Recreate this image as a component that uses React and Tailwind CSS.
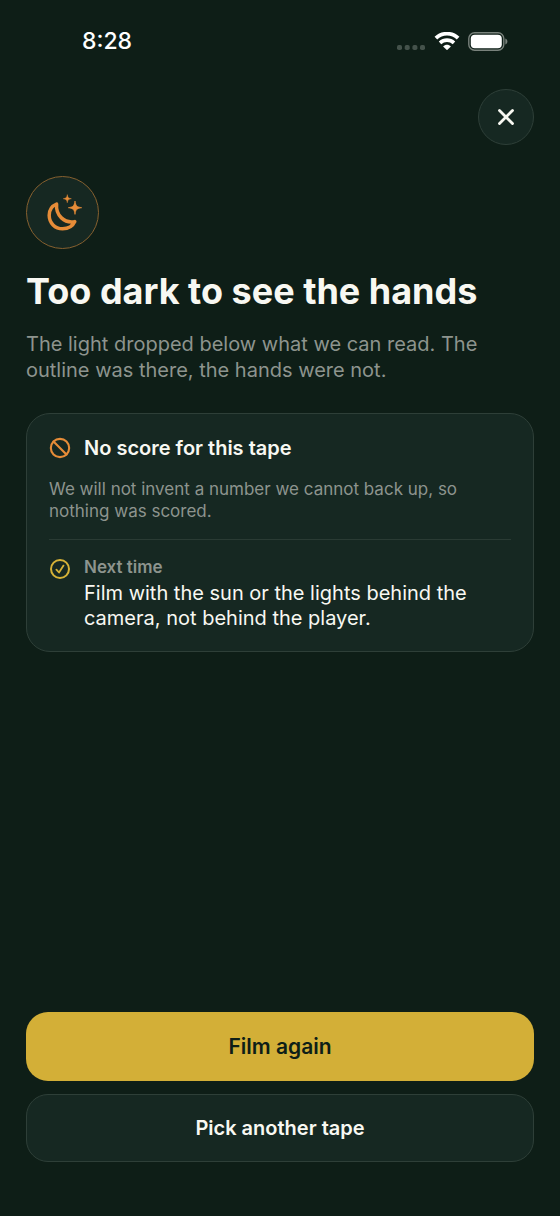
import { Ban, X } from 'lucide-react';

function StatusBar() {
  return (
    <div className="h-[82px] pl-14 pr-[26px] flex items-center justify-between text-white">
      <span className="text-[23px] font-medium">8:28</span>
      <div className="flex items-center gap-2">
        <svg width="29" height="20" viewBox="0 0 29 20" fill="#44524b">
          <rect x="0" y="14" width="5" height="5" rx="1.8" />
          <rect x="7.7" y="14" width="5" height="5" rx="1.8" />
          <rect x="15.4" y="14" width="5" height="5" rx="1.8" />
          <rect x="23" y="14" width="5" height="5" rx="1.8" />
        </svg>
        <svg width="26" height="18" viewBox="0 0 25 18" fill="none" stroke="currentColor">
          <path d="M1.4 6.2C7.5 .2 17.5 .2 23.6 6.2" strokeWidth="3.8" />
          <path d="M5.5 10.9C9.5 7.2 15.5 7.2 19.5 10.9" strokeWidth="3.6" />
          <path d="M8.6 14.4C10.8 12.2 14.2 12.2 16.4 14.4L12.5 18.2Z" fill="currentColor" stroke="none" />
        </svg>
        <svg width="40" height="19" viewBox="0 0 40 19" fill="none">
          <rect x=".8" y=".8" width="35" height="17.4" rx="5.8" stroke="#79827c" strokeWidth="1.4" />
          <rect x="2.8" y="2.8" width="31" height="13.4" rx="4" fill="#fff" />
          <path d="M37.3 6.5C40.1 7.4 40.1 11.6 37.3 12.5Z" fill="#79827c" />
        </svg>
      </div>
    </div>
  );
}

function MoonStars() {
  return (
    <svg width="40" height="40" viewBox="1 0 40 40" fill="none" aria-hidden="true">
      <path
        d="M14.6 11C9.8 13 7.2 17.4 7.2 22.3C7.2 30 13 35.8 20.6 35.8C26.2 35.8 30.6 33.4 32.8 28.6C22.5 30.6 13.5 22.5 14.6 11Z"
        stroke="currentColor"
        strokeWidth="3.5"
        strokeLinejoin="round"
      />
      <path d="M25.3 1.6C25.8 4.6 26.4 5.2 29.4 5.7C26.4 6.2 25.8 6.8 25.3 9.8C24.8 6.8 24.2 6.2 21.2 5.7C24.2 5.2 24.8 4.6 25.3 1.6Z" fill="currentColor" stroke="currentColor" strokeWidth=".4" />
      <path d="M33 8C33.8 13 34.7 13.9 39.7 14.7C34.7 15.5 33.8 16.4 33 21.4C32.2 16.4 31.3 15.5 26.3 14.7C31.3 13.9 32.2 13 33 8Z" fill="currentColor" stroke="currentColor" strokeWidth=".7" />
    </svg>
  );
}

function CheckMark() {
  return (
    <svg width="22" height="22" viewBox="0 0 22 22" fill="none" stroke="currentColor" strokeLinecap="round" strokeLinejoin="round" aria-hidden="true">
      <circle cx="11" cy="11" r="9" strokeWidth="2" />
      <path d="M7.4 11.6L10 14.5L14.5 7.6" strokeWidth="1.8" />
    </svg>
  );
}

export default function App() {
  return (
    <div className="min-h-screen flex flex-col bg-[#0e1e17] text-[#f8f8f2] font-['Inter',sans-serif] px-[26px]">
      <StatusBar />

      <header className="pt-[7px] flex justify-end">
        <button
          type="button"
          aria-label="Close"
          className="size-14 rounded-full bg-[#162822] border border-[#2e3f38] flex items-center justify-center"
        >
          <X size={26} strokeWidth={2.6} />
        </button>
      </header>

      <main className="flex-1 pt-[31px]">
        <div className="size-[73px] rounded-full bg-[#162822] border border-[#86602f] text-[#e68c38] flex items-center justify-center">
          <MoonStars />
        </div>

        <h1 className="mt-5 text-[36px] leading-[44px] font-bold">Too dark to see the hands</h1>
        <p className="mt-[18px] text-[20px] leading-[26px] text-[#8d948e]">
          The light dropped below what we can read. The outline was there, the hands were not.
        </p>

        {/* Result card */}
        <section className="mt-[30px] px-[22px] py-5 rounded-3xl bg-[#162822] border border-[#2e3f38]">
          <div className="flex items-center gap-[13px]">
            <Ban size={22} strokeWidth={2.3} className="text-[#e68c38]" />
            <h2 className="text-[20px] leading-7 font-semibold">No score for this tape</h2>
          </div>
          <p className="mt-4 text-[17px] leading-[22px] text-[#8d948e]">
            We will not invent a number we cannot back up, so nothing was scored.
          </p>

          <hr className="mt-[17px] mb-4 border-[#2a3b34]" />

          <div className="flex items-start gap-[13px]">
            <div className="shrink-0 pt-0.5 text-[#d6b237]">
              <CheckMark />
            </div>
            <div>
              <h3 className="text-[17px] leading-[22px] font-semibold text-[#8d948e]">Next time</h3>
              <p className="mt-[3px] text-[20px] leading-[25px]">
                Film with the sun or the lights behind the camera, not behind the player.
              </p>
            </div>
          </div>
        </section>
      </main>

      <footer className="pt-8 pb-[54px] flex flex-col gap-[13px]">
        <button type="button" className="h-[69px] rounded-[22px] bg-[#d3af37] text-[#0e1e17] text-[21px] font-semibold">
          Film again
        </button>
        <button type="button" className="h-[68px] rounded-[22px] bg-[#162822] border border-[#2e3f38] text-[20px] font-semibold">
          Pick another tape
        </button>
      </footer>
    </div>
  );
}
